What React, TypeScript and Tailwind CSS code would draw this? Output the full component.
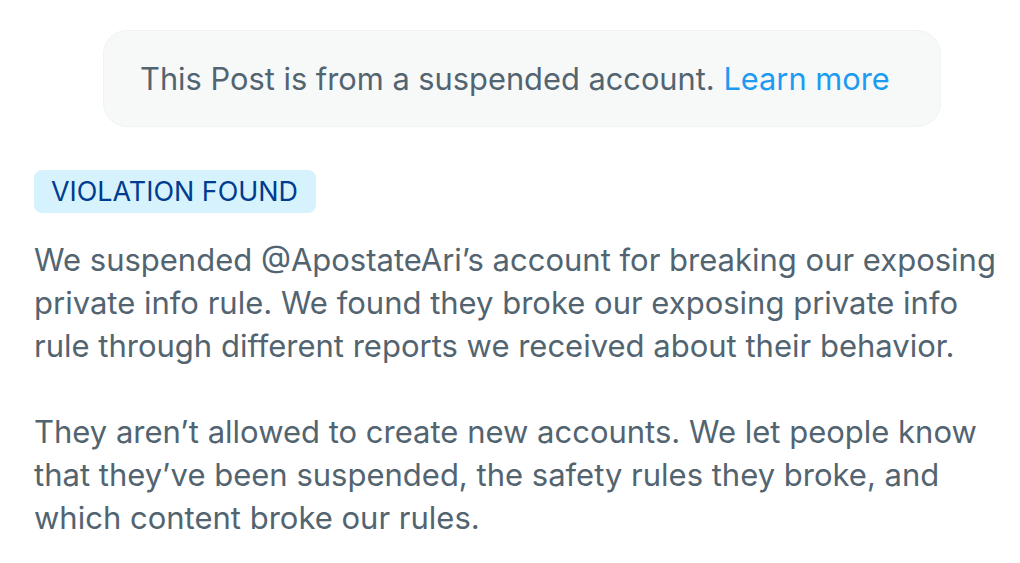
import React from 'react';

const font = { fontFamily: 'Inter, "Noto Sans", sans-serif' };

export default function App() {
    return (
        <div className="w-[1020px] h-[563px] bg-white overflow-hidden" style={font}>
            {/* suspended notice */}
            <div className="pt-[30px] pl-[103px]">
                <div className="w-[838px] h-[97px] rounded-[24px] bg-[#f7f9f9] border border-[#eff3f4] flex items-center pl-[36px]">
                    <p className="text-[30.8px] text-[#536471] pt-[1px]">
                        This Post is from a suspended account. <span className="text-[#1d9bf0]">Learn more</span>
                    </p>
                </div>
            </div>

            {/* violation */}
            <div className="pl-[34px] pt-[43px]">
                <span className="inline-flex items-center h-[43px] pl-[17px] pr-[18px] rounded-[8px] bg-[#d6f3fd] text-[#003c8f] text-[26.9px]">
                    VIOLATION FOUND
                </span>
                <div className="mt-[25px] text-[31px] leading-[43px] text-[#536471] w-[985px]">
                    <p>
                        We suspended @ApostateAri’s account for breaking our exposing<br />
                        private info rule. We found they broke our exposing private info<br />
                        rule through different reports we received about their behavior.
                    </p>
                    <p className="mt-[43px]">
                        They aren’t allowed to create new accounts. We let people know<br />
                        that they’ve been suspended, the safety rules they broke, and<br />
                        which content broke our rules.
                    </p>
                </div>
            </div>
        </div>
    );
}
